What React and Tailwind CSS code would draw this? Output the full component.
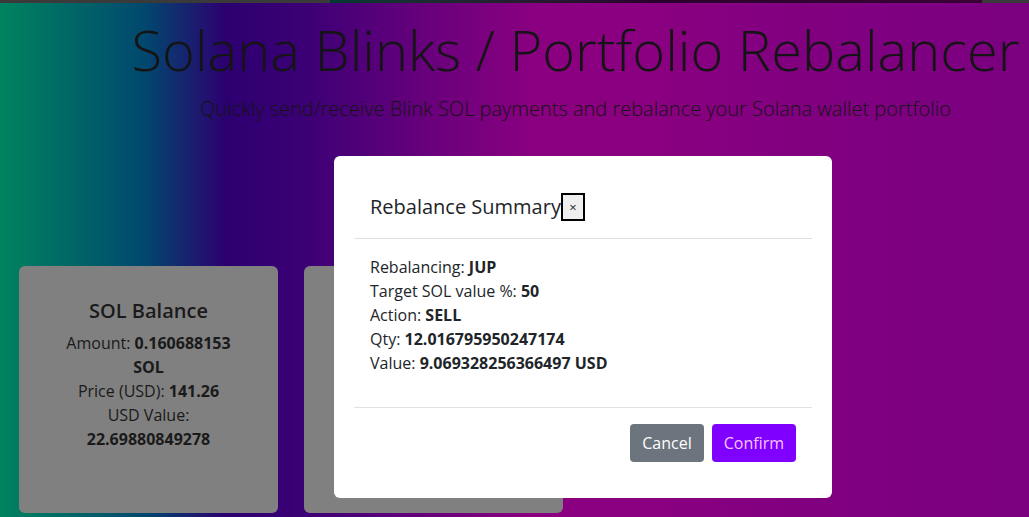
import React from 'react'

const font = { fontFamily: '"Open Sans", "Noto Sans", sans-serif' }

function BalanceCard({ title, children }) {
  return (
    <div className="w-[259px] h-[247px] shrink-0 rounded-md bg-[#808080] px-10 pt-[33px] text-center text-[#1a1a1a]">
      {title && <h5 className="text-[20px] font-semibold leading-[24px] mb-[8px]">{title}</h5>}
      <div className="text-[16px] leading-[24px]">{children}</div>
    </div>
  )
}

export default function App() {
  return (
    <div className="relative w-[1029px] h-[517px] overflow-hidden" style={font}>
      <div className="flex h-[3px]">
        <div className="w-[330px] bg-[#3a3a3a]" />
        <div className="flex-1 bg-gradient-to-r from-[#003a30] via-[#2a002e] to-[#3a0036]" />
        <div className="w-[47px] bg-[#3a3a3a]" />
      </div>
      <div className="h-[514px] bg-[linear-gradient(90deg,#00835f_0%,#006267_8%,#00486e_14%,#2c0070_22%,#3d0076_30%,#6a007c_42%,#8a0080_52%,#8a0080_62%,#800080_80%,#7a0080_100%)]">
        <div className="pl-[122px] text-center text-[#141414]">
          <h1 className="pt-[13px] text-[56px] font-light leading-[67px]">Solana Blinks / Portfolio Rebalancer</h1>
          <p className="mt-[11px] text-[20px] font-light leading-[30px]">Quickly send/receive Blink SOL payments and rebalance your Solana wallet portfolio</p>
        </div>
        <div className="mt-[142px] flex gap-[26px] pl-[19px]">
          <BalanceCard title="SOL Balance">
            <div>Amount: <b>0.160688153 SOL</b></div>
            <div>Price (USD): <b>141.26</b></div>
            <div>USD Value: <b>22.69880849278</b></div>
          </BalanceCard>
          <BalanceCard />
        </div>
      </div>

      <div className="absolute inset-0 pt-[156px] pl-[334px]">
        <div className="w-[498px] rounded-md bg-white p-[20px] text-[#212529]">
          <div className="flex items-center border-b border-[#dee2e6] px-[16px] h-[63px]">
            <h5 className="text-[20px] font-medium leading-[24px]">Rebalance Summary</h5>
            <button className="h-[28px] w-[24px] border-2 border-black bg-[#efefef] text-[13px] leading-none">×</button>
          </div>
          <div className="px-[16px] pt-[16px] pb-[32px] text-[16px] leading-[24px]">
            <div>Rebalancing: <b>JUP</b></div>
            <div>Target SOL value %: <b>50</b></div>
            <div>Action: <b>SELL</b></div>
            <div>Qty: <b>12.016795950247174</b></div>
            <div>Value: <b>9.069328256366497 USD</b></div>
          </div>
          <div className="flex justify-end gap-[8px] border-t border-[#dee2e6] p-[16px]">
            <button className="h-[38px] rounded-[4px] bg-[#6c757d] px-[12px] text-[16px] text-white">Cancel</button>
            <button className="h-[38px] rounded-[4px] bg-[#8000ff] px-[12px] text-[16px] text-[#f7c4ff]">Confirm</button>
          </div>
        </div>
      </div>
    </div>
  )
}
